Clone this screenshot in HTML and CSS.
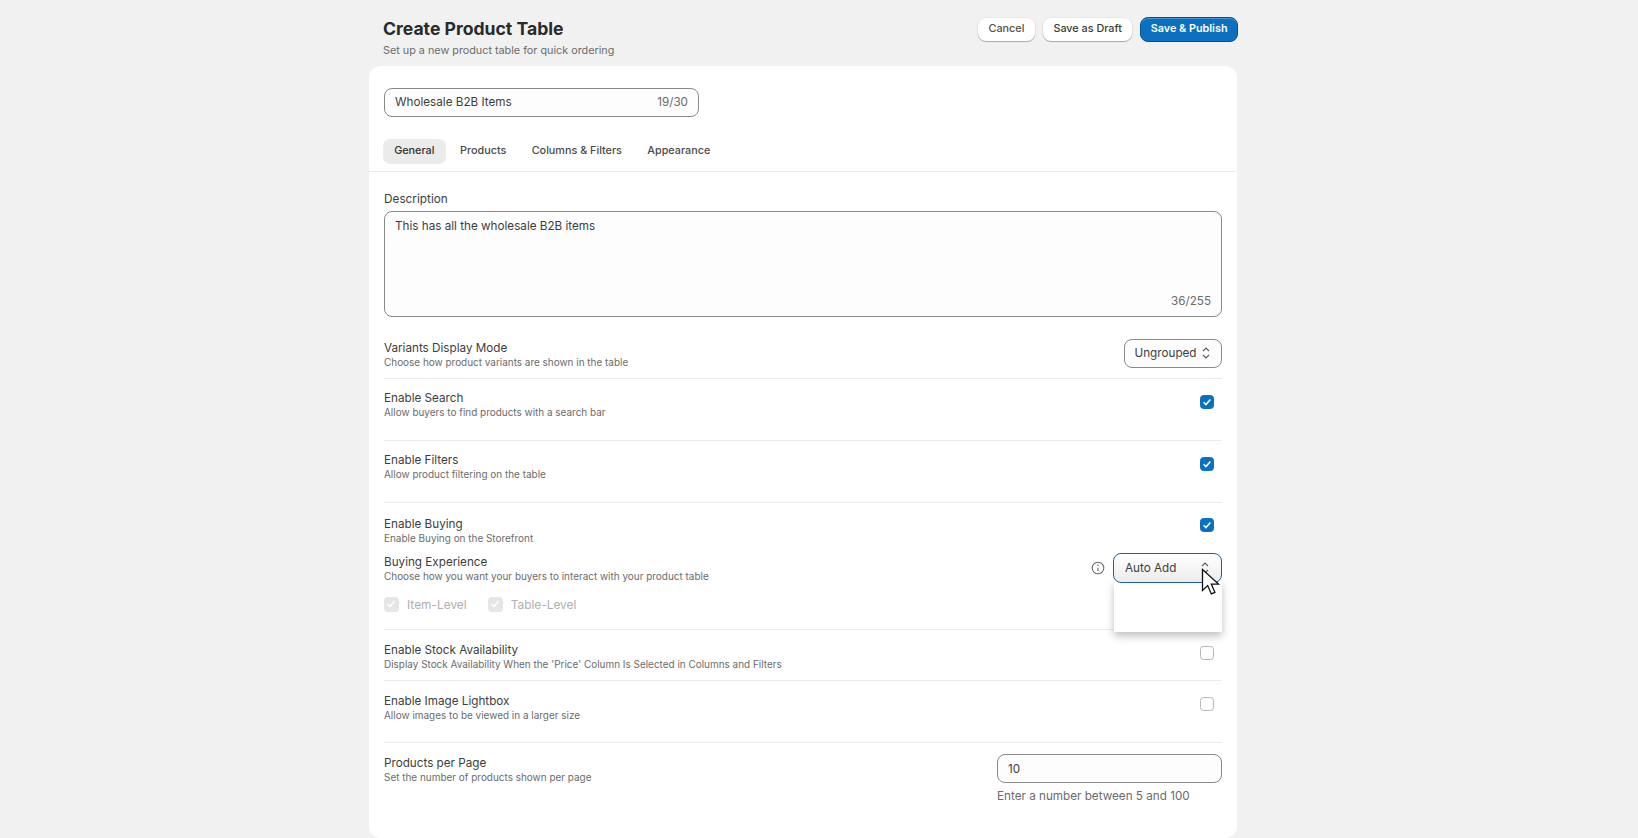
FILE: index.html
```html
<!DOCTYPE html>
<html>
<head>
    <title>Create Product Table</title>
    <link rel="stylesheet" href="styles.css">
</head>
<body>
    <main class="page">
        <header class="page-head">
            <div>
                <h1>Create Product Table</h1>
                <p class="page-sub">Set up a new product table for quick ordering</p>
            </div>
            <div class="actions">
                <button class="btn btn-cancel">Cancel</button>
                <button class="btn">Save as Draft</button>
                <button class="btn btn-primary">Save &amp; Publish</button>
            </div>
        </header>

        <section class="card">
            <div class="card-top">
                <div class="field name-field">
                    <span>Wholesale B2B Items</span>
                    <span class="count">19/30</span>
                </div>
                <nav class="tabs">
                    <a class="tab active">General</a>
                    <a class="tab">Products</a>
                    <a class="tab">Columns &amp; Filters</a>
                    <a class="tab">Appearance</a>
                </nav>
            </div>

            <div class="card-body">
                <label class="desc-label">Description</label>
                <div class="field textarea">
                    <span>This has all the wholesale B2B items</span>
                    <span class="count">36/255</span>
                </div>

                <div class="row row-variants">
                    <div>
                        <div class="label">Variants Display Mode</div>
                        <div class="help">Choose how product variants are shown in the table</div>
                    </div>
                    <div class="field select">
                        <span>Ungrouped</span>
                        <svg class="updown" viewBox="0 0 10 16"><path d="M2 6l3-3 3 3M2 10l3 3 3-3"/></svg>
                    </div>
                </div>

                <div class="row">
                    <div>
                        <div class="label">Enable Search</div>
                        <div class="help">Allow buyers to find products with a search bar</div>
                    </div>
                    <span class="check on"><svg viewBox="0 0 14 14"><path d="M3.6 7.3l2.3 2.3 4.5-5"/></svg></span>
                </div>

                <div class="row">
                    <div>
                        <div class="label">Enable Filters</div>
                        <div class="help">Allow product filtering on the table</div>
                    </div>
                    <span class="check on"><svg viewBox="0 0 14 14"><path d="M3.6 7.3l2.3 2.3 4.5-5"/></svg></span>
                </div>

                <div class="row row-buying">
                    <div class="buying-top">
                        <div>
                            <div class="label">Enable Buying</div>
                            <div class="help">Enable Buying on the Storefront</div>
                        </div>
                        <span class="check on"><svg viewBox="0 0 14 14"><path d="M3.6 7.3l2.3 2.3 4.5-5"/></svg></span>
                    </div>
                    <div class="buying-exp">
                        <div>
                            <div class="label">Buying Experience</div>
                            <div class="help">Choose how you want your buyers to interact with your product table</div>
                        </div>
                        <div class="exp-control">
                            <svg class="info" viewBox="0 0 14 14"><circle cx="7" cy="7" r="5.8"/><path d="M7 6.4v3.6"/><circle class="dot" cx="7" cy="4.3" r=".8"/></svg>
                            <div class="select-wrap">
                                <div class="field select select-open">
                                    <span>Auto Add</span>
                                    <svg class="updown" viewBox="0 0 10 16"><path d="M2 6l3-3 3 3M2 10l3 3 3-3"/></svg>
                                </div>
                                <div class="popover"></div>
                                <svg class="cursor" viewBox="0 0 20 28"><path d="M1.5 1.5v21l5.2-5 3.6 8.4 3.6-1.6-3.6-8.2h7.2z"/></svg>
                            </div>
                        </div>
                    </div>
                    <div class="levels">
                        <span class="level"><span class="check off"><svg viewBox="0 0 14 14"><path d="M3.6 7.3l2.3 2.3 4.5-5"/></svg></span>Item-Level</span>
                        <span class="level"><span class="check off"><svg viewBox="0 0 14 14"><path d="M3.6 7.3l2.3 2.3 4.5-5"/></svg></span>Table-Level</span>
                    </div>
                </div>

                <div class="row row-short">
                    <div>
                        <div class="label">Enable Stock Availability</div>
                        <div class="help">Display Stock Availability When the 'Price' Column Is Selected in Columns and Filters</div>
                    </div>
                    <span class="check"></span>
                </div>

                <div class="row row-low">
                    <div>
                        <div class="label">Enable Image Lightbox</div>
                        <div class="help">Allow images to be viewed in a larger size</div>
                    </div>
                    <span class="check"></span>
                </div>

                <div class="row row-last">
                    <div>
                        <div class="label">Products per Page</div>
                        <div class="help">Set the number of products shown per page</div>
                    </div>
                    <div class="per-page">
                        <div class="field number">10</div>
                        <div class="hint">Enter a number between 5 and 100</div>
                    </div>
                </div>
            </div>
        </section>
    </main>
</body>
</html>
```

FILE: styles.css
```css
* { box-sizing: border-box; }
html, body { margin: 0; height: 838px; overflow: hidden; }
body { background: #f1f1f1; font-family: Inter, "Liberation Sans", sans-serif; color: #303030; font-size: 12px; }

.page { width: 868px; margin-left: 369px; }

.page-head { height: 66px; padding: 16px 0 0 14px; display: flex; justify-content: space-between; align-items: flex-start; }
h1 { margin: 2px 0 0; font-size: 17.6px; line-height: 22px; font-weight: 650; color: #2a2a2a; }
.page-sub { margin: 3px 0 0; font-size: 10.8px; line-height: 15px; color: #6b6b6b; }

.actions { display: flex; align-items: center; gap: 8px; height: 25px; margin-top: 1px; margin-right: -1px; }
.btn { height: 23px; padding: 0 10.5px 2px; border: 0; border-radius: 8px; background: #fff; color: #3a3a3a; font: 500 10.8px Inter, sans-serif; box-shadow: 0 1px 1px rgba(0,0,0,.28), 0 0 0 .5px rgba(0,0,0,.08); }
.btn-cancel { color: #5a4c40; }
.btn-primary { height: 25px; padding: 0 9.5px 2px; background: #0a70c0; color: #fff; font-weight: 600; border: 1px solid #0b4f8a; box-shadow: inset 0 1px 0 rgba(255,255,255,.25); }

.card { background: #fff; border-radius: 12px; height: 772px; }
.card-top { padding: 22px 15px 7px; border-bottom: 1px solid #ebebeb; }

.field { border: 1px solid #8a8a8a; border-radius: 8px; background: #fdfdfd; font-size: 11.7px; color: #3d3d3d; }
.name-field { width: 315px; height: 29px; padding: 0 10px 2px; display: flex; justify-content: space-between; align-items: center; }
.count { color: #6b6b6b; }

.tabs { display: flex; gap: 3px; margin-top: 22px; margin-left: -1px; }
.tab { height: 25px; padding: 0 11.2px; line-height: 23px; border-radius: 7px; font-size: 10.8px; font-weight: 500; color: #4a4a4a; }
.tab.active { background: #ebebeb; color: #303030; padding-right: 11.5px; }

.card-body { padding: 20px 15px 0; }
.desc-label { display: block; font-size: 11.8px; line-height: 15px; color: #3d3d3d; }
.textarea { height: 106px; margin-top: 4px; padding: 7px 10px; position: relative; display: block; }
.textarea .count { position: absolute; right: 10px; bottom: 8px; }

.row { height: 62px; padding-top: 12px; border-bottom: 1px solid #ebebeb; display: flex; justify-content: space-between; align-items: flex-start; }
.row-variants { padding-top: 24px; }
.row-short { height: 51px; padding-top: 13px; }
.row-short .check, .row-low .check { margin-top: 3px; }
.row-low, .row-last { padding-top: 13px; }
.row-last { border-bottom: 0; }
.label { font-size: 11.7px; line-height: 15px; color: #3d3d3d; }
.help { font-size: 9.95px; line-height: 13px; color: #6b6b6b; }

.row-variants .select { width: 98px; margin-top: -2px; }
.select { height: 29px; padding: 0 10px 1px 9.5px; display: flex; justify-content: space-between; align-items: center; }
.updown { width: 10px; height: 16px; fill: none; stroke: #5c5c5c; stroke-width: 1.1; }

.check { width: 14px; height: 14px; margin-top: 4px; margin-right: 8px; border: 1px solid #b5b5b5; border-radius: 3.5px; background: #fff; display: block; flex: none; }
.check svg { display: block; width: 14px; height: 14px; margin: -1px; fill: none; stroke: #fff; stroke-width: 1.5; }
.check.on { background: #0a70c0; border-color: #0a70c0; }
.check.off { width: 15px; height: 15px; background: #e6e6e6; border-color: #e6e6e6; margin: 0; }

.row-buying { height: 127px; padding-top: 14px; display: block; }
.row-buying .buying-top .check { margin-top: 1px; }
.buying-top { display: flex; justify-content: space-between; align-items: flex-start; }
.buying-exp { display: flex; justify-content: space-between; align-items: flex-start; margin-top: 10px; }
.exp-control { display: flex; align-items: center; gap: 8px; margin-top: -2px; }
.info { width: 14px; height: 14px; fill: none; stroke: #6b6b6b; stroke-width: 1.1; }
.info .dot { fill: #6b6b6b; stroke: none; }

.select-wrap { position: relative; }
.select-open { width: 109px; height: 30px; padding: 0 11px; border: 1.5px solid #1f5f99; background: linear-gradient(#ffffff, #ececec); position: relative; z-index: 2; }
.popover { position: absolute; top: 28px; left: 1px; width: 108px; height: 51px; background: #fff; box-shadow: 0 4px 8px rgba(0,0,0,.25); z-index: 1; }
.cursor { position: absolute; top: 15px; left: 88px; width: 20px; height: 28px; fill: #fff; stroke: #111; stroke-width: 1.3; z-index: 3; }

.levels { display: flex; gap: 21px; margin-top: 14px; }
.level { display: flex; align-items: center; gap: 8px; font-size: 11.9px; color: #b0b0b0; }

.per-page { width: 225px; margin-top: -2px; }
.number { height: 29px; padding: 0 10px; display: flex; align-items: center; }
.hint { margin-top: 6px; font-size: 11.7px; line-height: 15px; color: #6b6b6b; }
```
